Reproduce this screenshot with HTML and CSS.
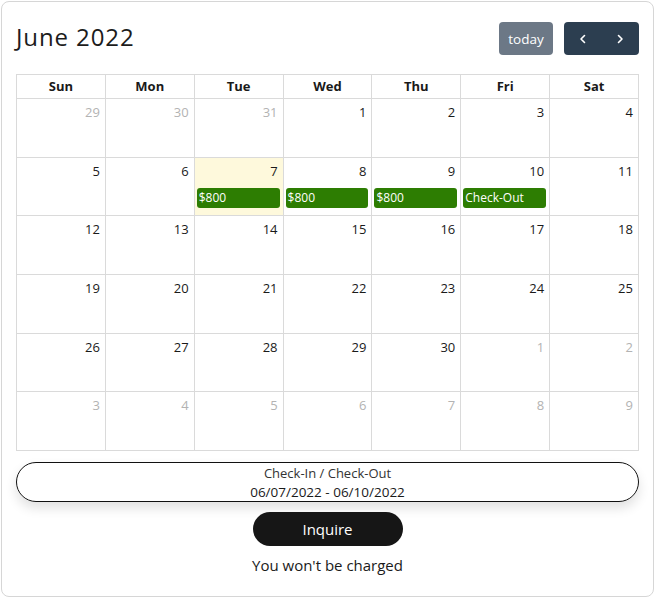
FILE: index.html
```html
<!DOCTYPE html>
<html>
<head>
    <title>Booking Calendar</title>
    <link rel="stylesheet" href="styles.css">
</head>
<body>
    <div class="card">
        <div class="toolbar">
            <h2 class="title">June 2022</h2>
            <div class="actions">
                <button class="btn today-btn">today</button>
                <div class="btn-group">
                    <button class="btn nav-btn">
                        <svg width="12" height="12" viewBox="0 0 12 12"><path d="M7.5 2.5 L4 6 L7.5 9.5" fill="none" stroke="#fff" stroke-width="1.6" stroke-linecap="round" stroke-linejoin="round"/></svg>
                    </button>
                    <button class="btn nav-btn">
                        <svg width="12" height="12" viewBox="0 0 12 12"><path d="M4.5 2.5 L8 6 L4.5 9.5" fill="none" stroke="#fff" stroke-width="1.6" stroke-linecap="round" stroke-linejoin="round"/></svg>
                    </button>
                </div>
            </div>
        </div>

        <div class="calendar">
            <div class="head">Sun</div>
            <div class="head">Mon</div>
            <div class="head">Tue</div>
            <div class="head">Wed</div>
            <div class="head">Thu</div>
            <div class="head">Fri</div>
            <div class="head">Sat</div>

            <div class="day other"><span class="num">29</span></div>
            <div class="day other"><span class="num">30</span></div>
            <div class="day other"><span class="num">31</span></div>
            <div class="day"><span class="num">1</span></div>
            <div class="day"><span class="num">2</span></div>
            <div class="day"><span class="num">3</span></div>
            <div class="day"><span class="num">4</span></div>

            <div class="day"><span class="num">5</span></div>
            <div class="day"><span class="num">6</span></div>
            <div class="day today"><span class="num">7</span><div class="event">$800</div></div>
            <div class="day"><span class="num">8</span><div class="event">$800</div></div>
            <div class="day"><span class="num">9</span><div class="event">$800</div></div>
            <div class="day"><span class="num">10</span><div class="event">Check-Out</div></div>
            <div class="day"><span class="num">11</span></div>

            <div class="day"><span class="num">12</span></div>
            <div class="day"><span class="num">13</span></div>
            <div class="day"><span class="num">14</span></div>
            <div class="day"><span class="num">15</span></div>
            <div class="day"><span class="num">16</span></div>
            <div class="day"><span class="num">17</span></div>
            <div class="day"><span class="num">18</span></div>

            <div class="day"><span class="num">19</span></div>
            <div class="day"><span class="num">20</span></div>
            <div class="day"><span class="num">21</span></div>
            <div class="day"><span class="num">22</span></div>
            <div class="day"><span class="num">23</span></div>
            <div class="day"><span class="num">24</span></div>
            <div class="day"><span class="num">25</span></div>

            <div class="day"><span class="num">26</span></div>
            <div class="day"><span class="num">27</span></div>
            <div class="day"><span class="num">28</span></div>
            <div class="day"><span class="num">29</span></div>
            <div class="day"><span class="num">30</span></div>
            <div class="day other"><span class="num">1</span></div>
            <div class="day other"><span class="num">2</span></div>

            <div class="day other"><span class="num">3</span></div>
            <div class="day other"><span class="num">4</span></div>
            <div class="day other"><span class="num">5</span></div>
            <div class="day other"><span class="num">6</span></div>
            <div class="day other"><span class="num">7</span></div>
            <div class="day other"><span class="num">8</span></div>
            <div class="day other"><span class="num">9</span></div>
        </div>

        <div class="range-box">
            <div class="range-label">Check-In / Check-Out</div>
            <div class="range-dates">06/07/2022 - 06/10/2022</div>
        </div>

        <button class="inquire">Inquire</button>
        <p class="note">You won't be charged</p>
    </div>
</body>
</html>
```

FILE: styles.css
```css
body {
    margin: 0;
    padding: 1px;
    background: #fff;
    font-family: 'Open Sans', 'Noto Sans', sans-serif;
    color: #1a1a1a;
}

.card {
    width: 623px;
    height: 556px;
    border: 1px solid #d6d6d6;
    border-radius: 8px;
    padding: 20px 14px 18px 14px;
    display: flex;
    flex-direction: column;
    align-items: center;
}

.toolbar {
    width: 100%;
    height: 33px;
    display: flex;
    justify-content: space-between;
    align-items: center;
    margin-bottom: 19px;
}

.title {
    margin: 0;
    padding-bottom: 4px;
    font-size: 24px;
    font-weight: 400;
    color: #1c1c1c;
    letter-spacing: 0.9px;
}

.actions {
    display: flex;
    gap: 11px;
}

.btn {
    border: none;
    height: 33px;
    color: #fff;
    font-family: inherit;
    cursor: pointer;
}

.today-btn {
    width: 54px;
    background: #6c7886;
    border-radius: 4px;
    font-size: 13.5px;
    padding: 0;
}

.btn-group {
    display: flex;
    background: #2c3e50;
    border-radius: 4px;
}

.nav-btn {
    width: 37.5px;
    background: transparent;
    display: flex;
    align-items: center;
    justify-content: center;
    padding: 0;
}

.calendar {
    width: 100%;
    display: grid;
    grid-template-columns: repeat(7, 1fr);
    grid-template-rows: 24px repeat(6, 58.67px);
    border-top: 1px solid #dadada;
    border-left: 1px solid #dadada;
    box-sizing: border-box;
}

.head,
.day {
    border-right: 1px solid #dadada;
    border-bottom: 1px solid #dadada;
}

.head {
    font-size: 13px;
    font-weight: 700;
    text-align: center;
    line-height: 23px;
    color: #1a1a1a;
}

.day {
    display: flex;
    flex-direction: column;
    align-items: stretch;
}

.num {
    text-align: right;
    font-size: 13px;
    padding: 5px 5px 0 0;
    line-height: 16px;
    color: #1a1a1a;
}

.other .num {
    color: #b3b3b3;
}

.today {
    background: #fef9dc;
}

.event {
    margin: 9px 3px 0 2px;
    height: 20px;
    line-height: 19px;
    background: #2d7d02;
    color: #fff;
    font-size: 12px;
    border-radius: 3px;
    padding-left: 2px;
}

.range-box {
    width: 100%;
    box-sizing: border-box;
    margin-top: 11px;
    height: 40px;
    border: 1px solid #111;
    border-radius: 20px;
    box-shadow: 0 6px 12px rgba(0, 0, 0, 0.12);
    text-align: center;
    display: flex;
    flex-direction: column;
    justify-content: center;
    padding-top: 2px;
}

.range-label {
    font-size: 13px;
    color: #333;
    line-height: 18px;
}

.range-dates {
    font-size: 13.5px;
    color: #1a1a1a;
    line-height: 20px;
}

.inquire {
    margin-top: 10px;
    width: 150px;
    height: 34px;
    border: none;
    border-radius: 17px;
    background: #161616;
    color: #fff;
    font-family: inherit;
    font-size: 15px;
}

.note {
    margin: 9px 0 0 0;
    font-size: 15px;
    line-height: 20px;
    color: #1a1a1a;
}
```
